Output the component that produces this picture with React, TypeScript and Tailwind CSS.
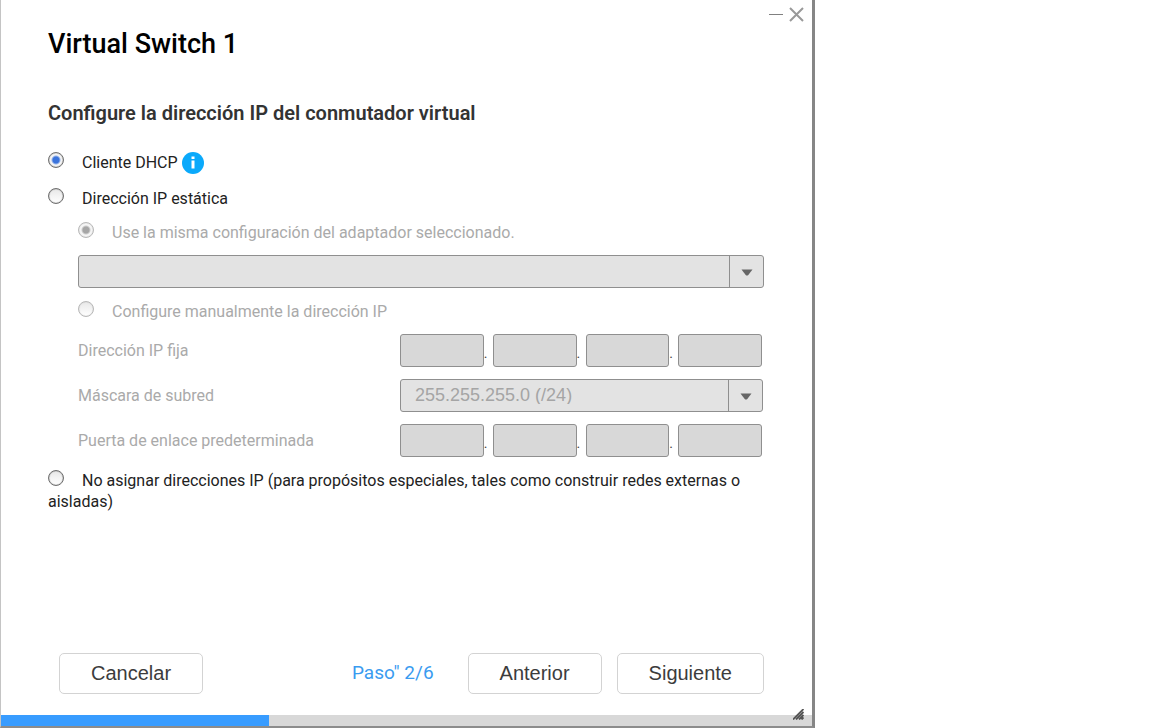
import { useState } from "react";
import type { InputHTMLAttributes, ReactNode, SelectHTMLAttributes } from "react";

const STEP = 2;
const TOTAL_STEPS = 6;

function Radio(props: InputHTMLAttributes<HTMLInputElement>) {
  return (
    <input
      type="radio"
      className="mr-[18px] inline-block size-4 appearance-none rounded-full border border-[#6f6f6f] bg-[linear-gradient(#e8e8e8,#ffffff)] align-baseline shadow-[inset_0_0_1px_#555] checked:bg-[radial-gradient(circle,#3b74dc_0,#3b74dc_3px,#f6f6f6_5px)] disabled:border-[#b8b8b8] disabled:shadow-[inset_0_0_1px_#bbb] disabled:checked:bg-[radial-gradient(circle,#a6a6a6_0,#a6a6a6_3px,#f6f6f6_5px)]"
      {...props}
    />
  );
}

function Select({ children, ...props }: SelectHTMLAttributes<HTMLSelectElement>) {
  return (
    <div className="relative">
      <select
        className="block h-[33px] w-full appearance-none rounded-[3px] border border-[#8f8f8f] bg-[#e3e3e3] pr-10 pb-0.5 pl-3.5 font-['Liberation_Sans',Arial,sans-serif] text-lg leading-none text-[#a5a5a5] opacity-100"
        {...props}
      >
        {children}
      </select>
      <span className="pointer-events-none absolute inset-y-0 right-0 flex w-[35px] items-center justify-center border-l border-[#8f8f8f]">
        <svg width="12" height="8" viewBox="0 0 12 8" fill="#666" aria-hidden="true">
          <path d="M.5 1.500h11L7.300 6.900Q6 8.200 4.700 6.900Z" />
        </svg>
      </span>
    </div>
  );
}

function AddressInput({ label }: { label: string }) {
  return (
    <div role="group" aria-label={label} className="flex items-end pr-px">
      {[1, 2, 3, 4].map((octet) => (
        <div key={octet} className={octet < 4 ? "flex flex-[93] items-end" : "flex flex-[84] items-end"}>
          <input
            type="text"
            disabled
            aria-label={`${label} ${octet}`}
            className="h-[33px] w-full min-w-0 rounded-[3px] border border-[#8f8f8f] bg-[#d8d8d8]"
          />
          {octet < 4 && (
            <span className="w-[9px] shrink-0 text-sm leading-7 text-[#444]">.</span>
          )}
        </div>
      ))}
    </div>
  );
}

function Field({ label, children }: { label: string; children: ReactNode }) {
  return (
    <div className="grid grid-cols-[322px_1fr] items-center">
      <span>{label}</span>
      {children}
    </div>
  );
}

function FooterButton({ children }: { children: ReactNode }) {
  return (
    <button
      type="button"
      className="h-[41px] rounded-[5px] border border-[#d3d3d3] bg-white px-[31px] pb-0.5 font-['Liberation_Sans',Arial,sans-serif] text-xl text-[#3c3c3c]"
    >
      {children}
    </button>
  );
}

export default function App() {
  const [mode, setMode] = useState("dhcp");

  return (
    <div className="min-h-screen bg-white font-[Roboto,sans-serif]">
      <main className="flex min-h-screen w-full max-w-[815px] flex-col border-r-[3px] border-b-2 border-l border-r-[#868686] border-b-[#8c8c8c] border-l-[#c4c4c4]">
        {/* Window controls */}
        <div className="flex h-7 items-center justify-end gap-1.5 pr-2 text-[#999]">
          <button type="button" aria-label="Minimizar">
            <svg width="14" height="14" viewBox="0 0 14 14" stroke="#808080" aria-hidden="true">
              <path d="M0 7.500h14" />
            </svg>
          </button>
          <button type="button" aria-label="Cerrar">
            <svg width="15" height="15" viewBox="0 0 15 15" stroke="currentColor" strokeWidth="2" aria-hidden="true">
              <path d="M1 1l13 13M14 1L1 14" />
            </svg>
          </button>
        </div>

        <form className="flex flex-1 flex-col pr-12 pl-[47px]">
          <h1 className="text-[27px] leading-8 font-medium text-black">Virtual Switch 1</h1>
          <h2 className="mt-10 text-xl leading-[26px] font-semibold text-[#333]">
            Configure la dirección IP del conmutador virtual
          </h2>

          <div className="mt-6 flex flex-col gap-2.5 text-base leading-[26px] text-[#222]">
            <div className="flex items-center">
              <label>
                <Radio name="mode" checked={mode === "dhcp"} onChange={() => setMode("dhcp")} />
                Cliente DHCP
              </label>
              <svg className="ml-1" width="22" height="22" viewBox="0 0 22 22" aria-hidden="true">
                <circle cx="11" cy="11" r="11" fill="#0aa9fb" />
                <path d="M9.500 4.500h3v2.500h-3zM9.500 8.500h3v8h-3z" fill="#fff" />
              </svg>
            </div>
            <label>
              <Radio name="mode" checked={mode === "static"} onChange={() => setMode("static")} />
              Dirección IP estática
            </label>

            {/* Static address options */}
            <div className="-mt-0.5 flex flex-col gap-[9px] pl-[30px] text-[#aaa]">
              <label>
                <Radio name="source" defaultChecked disabled />
                Use la misma configuración del adaptador seleccionado.
              </label>
              <Select disabled aria-label="Adaptador" />
              <label className="mt-0.5">
                <Radio name="source" disabled />
                Configure manualmente la dirección IP
              </label>
              <div className="flex flex-col gap-3 pr-px">
                <Field label="Dirección IP fija">
                  <AddressInput label="Dirección IP fija" />
                </Field>
                <Field label="Máscara de subred">
                  <Select disabled aria-label="Máscara de subred">
                    <option>255.255.255.0 (/24)</option>
                  </Select>
                </Field>
                <Field label="Puerta de enlace predeterminada">
                  <AddressInput label="Puerta de enlace predeterminada" />
                </Field>
              </div>
            </div>

            <label className="mt-[3px] leading-[21px]">
              <Radio name="mode" checked={mode === "none"} onChange={() => setMode("none")} />
              No asignar direcciones IP (para propósitos especiales, tales como construir redes externas o
              aisladas)
            </label>
          </div>

          <footer className="mt-auto mb-[21px] flex items-center pl-[11px]">
            <FooterButton>Cancelar</FooterButton>
            <span className="mr-[34px] ml-auto text-[19px] text-[#3a9bf0]">
              Paso" {STEP}/{TOTAL_STEPS}
            </span>
            <div className="flex gap-[15px]">
              <FooterButton>Anterior</FooterButton>
              <FooterButton>Siguiente</FooterButton>
            </div>
          </footer>
        </form>

        <div className="relative h-[11px] bg-[#d8d8d8]">
          <div
            className="h-full bg-[#389cff]"
            style={{ width: `${Math.floor((STEP / TOTAL_STEPS) * 100)}%` }}
          />
          <svg
            className="absolute right-2 bottom-1.5"
            width="11"
            height="11"
            viewBox="0 0 11 11"
            stroke="#555"
            strokeWidth="1.800"
            aria-hidden="true"
          >
            <path d="M0 10.500L10.500 0M3 10.500L10.500 3M6 10.500L10.500 6M8.500 10.500L10.500 8.500" />
          </svg>
        </div>
      </main>
    </div>
  );
}
